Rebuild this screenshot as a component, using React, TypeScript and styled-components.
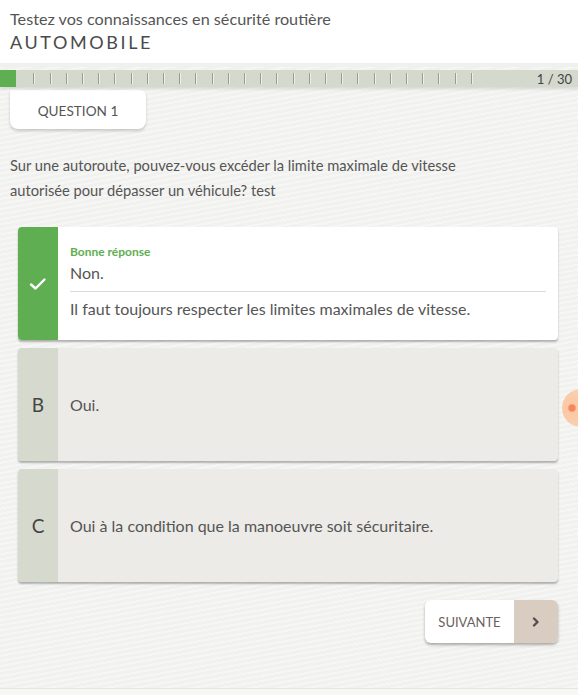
import React from "react";
import styled, { createGlobalStyle, css } from "styled-components";

const GlobalStyle = createGlobalStyle`
  html, body {
    margin: 0;
    padding: 0;
  }
  body {
    font-family: Lato, "Open Sans", "Liberation Sans", sans-serif;
    background: #f2f2f0;
    color: #555;
  }
`;

const Page = styled.div`
  position: relative;
  width: 578px;
  height: 695px;
  overflow: hidden;
  background:
    repeating-linear-gradient(
      170deg,
      rgba(255, 255, 255, 0.35) 0px,
      rgba(255, 255, 255, 0.35) 2px,
      rgba(0, 0, 0, 0) 2px,
      rgba(0, 0, 0, 0) 5px
    ),
    #f1f1ef;
`;

const Header = styled.header`
  background: #fff;
  padding: 10px 10px 0;
  height: 53px;
  border-bottom: 4px solid #f0f0ee;
`;

const Subtitle = styled.div`
  font-size: 16.2px;
  line-height: 18px;
  color: #555;
`;

const Title = styled.h1`
  margin: 4px 0 0;
  font-size: 18px;
  line-height: 20px;
  font-weight: 400;
  letter-spacing: 2.6px;
  color: #4a4a4a;
`;

const ProgressBar = styled.div`
  display: flex;
  align-items: center;
  height: 17px;
  margin-top: 3px;
  background: #d5d8cc;
  box-shadow: 0 2px 3px rgba(0, 0, 0, 0.12);
  position: relative;
  z-index: 1;
`;

const Segments = styled.div`
  display: flex;
  width: 487px;
  height: 100%;
`;

const Segment = styled.div<{ $done?: boolean; $first?: boolean }>`
  flex: 1;
  position: relative;
  ${({ $done }) =>
    $done &&
    css`
      background: #5fae52;
      margin-right: 1px;
    `}
  ${({ $first }) =>
    !$first &&
    css`
      &::before {
        content: "";
        position: absolute;
        left: 0;
        top: 3px;
        height: 11px;
        width: 1px;
        background: #9a9c94;
        box-shadow: 1px 0 0 #eef0e8;
      }
    `}
`;

const Counter = styled.div`
  flex: 1;
  text-align: right;
  padding-right: 6px;
  font-size: 13px;
  color: #444;
`;

const Main = styled.main`
  padding: 0 10px;
`;

const QuestionTab = styled.div`
  width: 136px;
  height: 39px;
  margin-top: 3px;
  padding-top: 2px;
  box-sizing: border-box;
  display: flex;
  align-items: center;
  justify-content: center;
  background: #fff;
  border-radius: 0 6px 8px 8px;
  box-shadow: 0 2px 3px rgba(0, 0, 0, 0.18);
  font-size: 13.6px;
  color: #555;
`;

const QuestionText = styled.p`
  margin: 24px 0 0;
  font-size: 14.7px;
  line-height: 25px;
  color: #555;
`;

const Answers = styled.div`
  display: flex;
  flex-direction: column;
  gap: 8px;
  margin: 24px 20px 0 18px;
`;

const Card = styled.div<{ $correct?: boolean }>`
  display: flex;
  min-height: 113px;
  border-radius: 4px;
  overflow: hidden;
  background: ${({ $correct }) => ($correct ? "#fff" : "#ecebe7")};
  box-shadow: 0 2px 2px rgba(0, 0, 0, 0.28);
`;

const Marker = styled.div<{ $correct?: boolean }>`
  width: 40px;
  flex-shrink: 0;
  display: flex;
  align-items: center;
  justify-content: center;
  background: ${({ $correct }) => ($correct ? "#5fae52" : "#d6d9ce")};
  font-size: 19px;
  color: #444;
`;

const CardBody = styled.div<{ $center?: boolean }>`
  flex: 1;
  padding: ${({ $center }) => ($center ? "0 12px" : "18px 12px 0 12px")};
  display: flex;
  flex-direction: column;
  justify-content: ${({ $center }) => ($center ? "center" : "flex-start")};
`;

const Verdict = styled.div`
  font-size: 12px;
  font-weight: 700;
  color: #5fae52;
  line-height: 14px;
`;

const AnswerText = styled.div<{ $lead?: boolean }>`
  font-size: 16px;
  line-height: 20px;
  color: #555;
  margin-top: ${({ $lead }) => ($lead ? "4px" : "0")};
`;

const Divider = styled.hr`
  border: 0;
  border-top: 1px solid #dcdbd5;
  margin: 8px 0 7px;
`;

const Footer = styled.div`
  display: flex;
  justify-content: flex-end;
  margin: 18px 20px 0;
`;

const NextButton = styled.button`
  display: flex;
  height: 43px;
  padding: 0;
  border: 0;
  border-radius: 6px;
  overflow: hidden;
  background: #fff;
  box-shadow: 0 2px 3px rgba(0, 0, 0, 0.3);
  font-family: inherit;
  cursor: pointer;
`;

const NextLabel = styled.span`
  width: 89px;
  display: flex;
  align-items: center;
  justify-content: center;
  font-size: 13px;
  color: #6b5e5e;
`;

const NextArrow = styled.span`
  width: 44px;
  display: flex;
  align-items: center;
  justify-content: center;
  background: #d9cdc1;
`;

const BottomStrip = styled.div`
  position: absolute;
  left: 0;
  right: 0;
  bottom: 0;
  height: 6px;
  background: #f7f7f5;
  border-top: 1px solid #e6e6e2;
`;

const Bubble = styled.div`
  position: absolute;
  left: 562px;
  top: 389px;
  width: 38px;
  height: 38px;
  border-radius: 50%;
  background: radial-gradient(circle at 10px 19px, #f47b4c 0 3px, #fbc39b 4.5px, #fdd2b2 30px);
  opacity: 0.9;
`;

const Check = () => (
  <svg width="18" height="14" viewBox="0 0 18 14">
    <polyline
      points="2,7.5 6.5,11.5 15.5,2.5"
      fill="none"
      stroke="#fff"
      strokeWidth="2.4"
      strokeLinecap="round"
      strokeLinejoin="round"
    />
  </svg>
);

const Chevron = () => (
  <svg width="8" height="10" viewBox="0 0 8 10">
    <polyline
      points="2,1.5 5.5,5 2,8.5"
      fill="none"
      stroke="#5a4d4d"
      strokeWidth="2.4"
      strokeLinecap="round"
      strokeLinejoin="round"
    />
  </svg>
);

const answers = [
  { letter: "B", text: "Oui." },
  { letter: "C", text: "Oui à la condition que la manoeuvre soit sécuritaire." },
];

export default function App() {
  return (
    <Page>
      <GlobalStyle />
      <Header>
        <Subtitle>Testez vos connaissances en sécurité routière</Subtitle>
        <Title>AUTOMOBILE</Title>
      </Header>
      <ProgressBar>
        <Segments>
          {Array.from({ length: 30 }).map((_, i) => (
            <Segment key={i} $done={i === 0} $first={i < 2} />
          ))}
        </Segments>
        <Counter>1 / 30</Counter>
      </ProgressBar>
      <Main>
        <QuestionTab>QUESTION 1</QuestionTab>
        <QuestionText>
          Sur une autoroute, pouvez-vous excéder la limite maximale de vitesse
          <br />
          autorisée pour dépasser un véhicule? test
        </QuestionText>
      </Main>
      <Answers>
        <Card $correct>
          <Marker $correct>
            <Check />
          </Marker>
          <CardBody>
            <Verdict>Bonne réponse</Verdict>
            <AnswerText $lead>Non.</AnswerText>
            <Divider />
            <AnswerText>Il faut toujours respecter les limites maximales de vitesse.</AnswerText>
          </CardBody>
        </Card>
        {answers.map((a) => (
          <Card key={a.letter}>
            <Marker>{a.letter}</Marker>
            <CardBody $center>
              <AnswerText>{a.text}</AnswerText>
            </CardBody>
          </Card>
        ))}
      </Answers>
      <Footer>
        <NextButton>
          <NextLabel>SUIVANTE</NextLabel>
          <NextArrow>
            <Chevron />
          </NextArrow>
        </NextButton>
      </Footer>
      <Bubble />
      <BottomStrip />
    </Page>
  );
}
